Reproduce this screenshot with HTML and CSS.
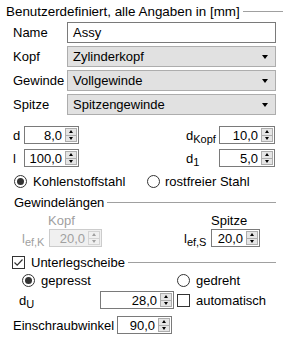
FILE: index.html
```html
<!DOCTYPE html>
<html lang="de">

<head>
  <meta charset="UTF-8">
  <title>Benutzerdefiniert</title>
  <link rel="stylesheet" href="styles.css">
</head>

<body>
  <div id="panel">
    <div class="head head-top"><span>Benutzerdefiniert, alle Angaben in [mm]</span><i class="rule"></i></div>

    <div class="form">
      <span class="lbl">Name</span>
      <div class="textbox">Assy</div>
      <span class="lbl">Kopf</span>
      <div class="combo">Zylinderkopf<b class="caret"></b></div>
      <span class="lbl">Gewinde</span>
      <div class="combo">Vollgewinde<b class="caret"></b></div>
      <span class="lbl">Spitze</span>
      <div class="combo">Spitzengewinde<b class="caret"></b></div>
    </div>

    <div class="row dim-row first">
      <span class="lbl-s">d</span>
      <div class="spin w55"><span class="val">8,0</span><span class="btns"><i class="up"></i><i class="dn"></i></span></div>
      <span class="lbl-r">d<sub>Kopf</sub></span>
      <div class="spin w56"><span class="val">10,0</span><span class="btns"><i class="up"></i><i class="dn"></i></span></div>
    </div>
    <div class="row dim-row">
      <span class="lbl-s">l</span>
      <div class="spin w55"><span class="val">100,0</span><span class="btns"><i class="up"></i><i class="dn"></i></span></div>
      <span class="lbl-r">d<sub>1</sub></span>
      <div class="spin w56"><span class="val">5,0</span><span class="btns"><i class="up"></i><i class="dn"></i></span></div>
    </div>

    <div class="row radio-row">
      <span class="opt opt-a"><i class="radio on"></i>Kohlenstoffstahl</span>
      <span class="opt"><i class="radio"></i>rostfreier Stahl</span>
    </div>

    <div class="head head-sub"><span>Gewindelängen</span><i class="rule"></i></div>

    <div class="row cap-row">
      <span class="cap cap-k">Kopf</span>
      <span class="cap">Spitze</span>
    </div>
    <div class="row len-row">
      <span class="lbl-ef off">l<sub>ef,K</sub></span>
      <div class="spin w53 disabled"><span class="val">20,0</span><span class="btns"><i class="up"></i><i class="dn"></i></span></div>
      <span class="lbl-ef ef-s">l<sub>ef,S</sub></span>
      <div class="spin w49"><span class="val">20,0</span><span class="btns"><i class="up"></i><i class="dn"></i></span></div>
    </div>

    <div class="head head-chk">
      <span class="opt"><i class="check on"><svg width="11" height="11" viewBox="0 0 11 11"><path d="M1.5 5.5 L4.2 8.2 L9.5 2.5" fill="none" stroke="#333" stroke-width="1.2"/></svg></i>Unterlegscheibe</span>
      <i class="rule"></i>
    </div>

    <div class="row press-row">
      <span class="opt opt-p"><i class="radio on"></i>gepresst</span>
      <span class="opt"><i class="radio"></i>gedreht</span>
    </div>
    <div class="row du-row">
      <span class="lbl-du">d<sub>U</sub></span>
      <div class="spin w74"><span class="val">28,0</span><span class="btns"><i class="up"></i><i class="dn"></i></span></div>
      <span class="opt opt-auto"><i class="check"></i>automatisch</span>
    </div>
    <div class="row angle-row">
      <span class="lbl-angle">Einschraubwinkel</span>
      <div class="spin w55"><span class="val">90,0</span><span class="btns"><i class="up"></i><i class="dn"></i></span></div>
    </div>
  </div>
</body>

</html>
```

FILE: styles.css
```css
* {
  margin: 0;
  padding: 0;
  box-sizing: border-box;
}

body {
  background: #ffffff;
  color: #000000;
  font-family: "Liberation Sans", Arial, sans-serif;
  font-size: 13px;
}

#panel {
  width: 287px;
  height: 344px;
  overflow: hidden;
}

/* group headers with a line */
.head {
  display: flex;
  align-items: center;
  white-space: nowrap;
}

.head .rule {
  flex: 1;
  height: 1px;
  background: #a0a0a0;
  margin-left: 3px;
}

.head-top {
  height: 18px;
  margin-top: 2px;
  padding-left: 6px;
  padding-right: 4px;
  font-size: 13.4px;
}

.head-sub {
  height: 16px;
  margin-top: 6px;
  padding-left: 14px;
  padding-right: 11px;
}

.head-chk {
  height: 16px;
  margin-top: 7px;
  padding-left: 12px;
  padding-right: 11px;
}

/* top form */
.form {
  display: grid;
  grid-template-columns: 54px 209px;
  grid-auto-rows: 21px;
  row-gap: 3px;
  margin-top: 2px;
  margin-left: 13px;
}

.lbl {
  display: flex;
  align-items: center;
}

.textbox {
  border: 1px solid #7a7a7a;
  background: #ffffff;
  padding-left: 5px;
  display: flex;
  align-items: center;
}

.combo {
  position: relative;
  border: 1px solid #adadad;
  background: #e1e1e1;
  padding-left: 5px;
  display: flex;
  align-items: center;
}

.caret {
  position: absolute;
  right: 7px;
  top: 8px;
  width: 0;
  height: 0;
  border-left: 3.5px solid transparent;
  border-right: 3.5px solid transparent;
  border-top: 4px solid #000;
}

/* rows */
.row {
  display: flex;
  align-items: center;
  white-space: nowrap;
}

.dim-row {
  height: 18px;
  margin-top: 5px;
  padding-left: 13px;
}

.dim-row.first {
  margin-top: 11px;
}

.lbl-s {
  width: 11px;
}

.lbl-r {
  width: 33px;
  margin-left: auto;
}

.dim-row .spin.w56 {
  margin-right: 12px;
}

sub {
  font-size: 11px;
  vertical-align: -3px;
  line-height: 0;
}

/* spin box */
.spin {
  height: 18px;
  border: 1px solid #7a7a7a;
  background: #ffffff;
  display: flex;
  align-items: center;
}

.spin .val {
  flex: 1;
  text-align: right;
  padding-right: 3px;
}

.spin .btns {
  width: 12px;
  height: 14px;
  margin-right: 1px;
  display: flex;
  flex-direction: column;
  border: 1px solid #adadad;
  background: #e5e5e5;
}

.spin .btns i {
  flex: 1;
  display: flex;
  align-items: center;
  justify-content: center;
}

.spin .btns i.up {
  border-bottom: 1px solid #adadad;
}

.spin .btns i.up::after {
  content: "";
  border-left: 2.5px solid transparent;
  border-right: 2.5px solid transparent;
  border-bottom: 3px solid #000;
}

.spin .btns i.dn::after {
  content: "";
  border-left: 2.5px solid transparent;
  border-right: 2.5px solid transparent;
  border-top: 3px solid #000;
}

.spin.disabled {
  border-color: #cccccc;
  background: #f0f0f0;
  color: #a0a0a0;
}

.spin.disabled .btns {
  border-color: #d4d4d4;
  background: #f0f0f0;
}

.spin.disabled .btns i.up {
  border-bottom-color: #d4d4d4;
}

.spin.disabled .btns i.up::after {
  border-bottom-color: #a0a0a0;
}

.spin.disabled .btns i.dn::after {
  border-top-color: #a0a0a0;
}

.w49 { width: 49px; }
.w53 { width: 53px; }
.w55 { width: 55px; }
.w56 { width: 56px; }
.w74 { width: 74px; }

/* radios and checks */
.opt {
  display: flex;
  align-items: center;
  white-space: nowrap;
}

.radio {
  width: 13px;
  height: 13px;
  border: 1px solid #333333;
  border-radius: 50%;
  background: #ffffff;
  margin-right: 6px;
  display: flex;
  align-items: center;
  justify-content: center;
}

.radio.on::after {
  content: "";
  width: 7px;
  height: 7px;
  border-radius: 50%;
  background: #333333;
}

.check {
  width: 13px;
  height: 13px;
  border: 1px solid #333333;
  background: #ffffff;
  margin-right: 6px;
  display: flex;
  align-items: center;
  justify-content: center;
}

.radio-row {
  height: 14px;
  margin-top: 7px;
  padding-left: 14px;
}

.opt-a {
  width: 133px;
}

.radio-row .radio {
  margin-right: 5px;
}

.radio-row .opt-a .radio {
  margin-right: 6px;
}

.cap-row {
  height: 14px;
  margin-top: 3px;
  padding-left: 48px;
}

.cap-k {
  width: 163px;
  color: #a0a0a0;
}

.len-row {
  height: 18px;
  margin-top: 2px;
  padding-left: 22px;
}

.lbl-ef {
  width: 27px;
}

.lbl-ef.off {
  color: #a0a0a0;
}

.lbl-ef.ef-s {
  margin-left: 82px;
}

.press-row {
  height: 14px;
  margin-top: 3px;
  padding-left: 22px;
}

.opt-p {
  width: 155px;
}

.du-row {
  height: 18px;
  margin-top: 4px;
  padding-left: 19px;
}

.lbl-du {
  width: 81px;
}

.opt-auto {
  margin-left: 3px;
}

.angle-row {
  height: 18px;
  margin-top: 7px;
  padding-left: 13px;
}

.lbl-angle {
  width: 104px;
}
```
